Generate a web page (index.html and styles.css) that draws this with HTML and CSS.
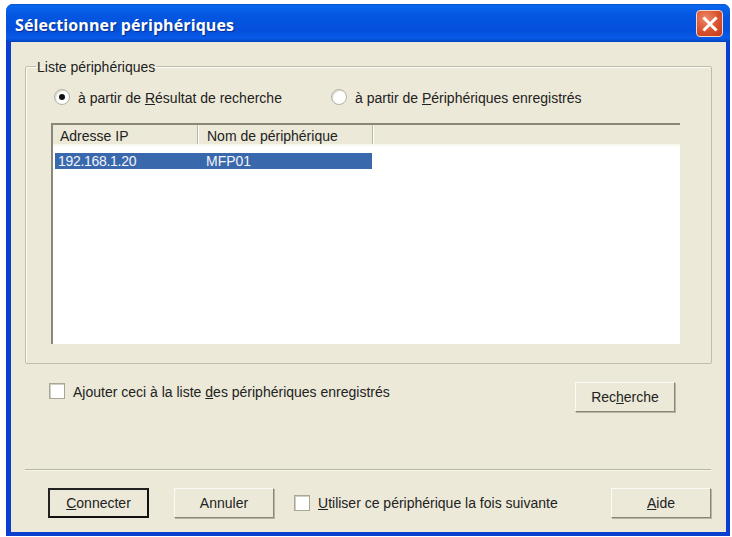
FILE: index.html
```html
<!DOCTYPE html>
<html lang="fr">
<head>
<meta charset="utf-8">
<title>Sélectionner périphériques</title>
<link rel="stylesheet" href="styles.css">
</head>
<body>
<div class="window">
  <div class="titlebar">
    <span class="title">Sélectionner périphériques</span>
    <span class="close">
      <svg width="16" height="16" viewBox="0 0 16 16"><path d="M2.5 2.5 L13.5 13.5 M13.5 2.5 L2.5 13.5" stroke="#fff" stroke-width="3" stroke-linecap="square" fill="none"/></svg>
    </span>
  </div>
  <div class="client">
    <fieldset class="group">
      <legend class="legend">Liste périphériques</legend>
      <div class="radios">
        <label class="radio-item first"><span class="radio checked"></span><span>à partir de <u>R</u>ésultat de recherche</span></label>
        <label class="radio-item"><span class="radio"></span><span>à partir de <u>P</u>ériphériques enregistrés</span></label>
      </div>
      <div class="list">
        <div class="list-head">
          <div class="col col-ip">Adresse IP</div>
          <div class="col col-name">Nom de périphérique</div>
          <div class="col col-rest"></div>
        </div>
        <div class="list-body">
          <div class="row"><span class="cell-ip">192.168.1.20</span><span class="cell-name">MFP01</span></div>
        </div>
      </div>
    </fieldset>
    <div class="middle">
      <label class="check-item"><span class="check"></span><span>Ajouter ceci à la liste <u>d</u>es périphériques enregistrés</span></label>
      <button class="btn">Rec<u>h</u>erche</button>
    </div>
    <div class="separator"></div>
    <div class="footer">
      <button class="btn default"><u>C</u>onnecter</button>
      <button class="btn">Annuler</button>
      <label class="check-item next"><span class="check"></span><span><u>U</u>tiliser ce périphérique la fois suivante</span></label>
      <button class="btn"><u>A</u>ide</button>
    </div>
  </div>
</div>
</body>
</html>
```
FILE: styles.css
```css
* { box-sizing: border-box; }
html, body { margin: 0; height: 100%; background: #fff; }
body { padding: 4px 2px 1px 6px; font-family: "Liberation Sans", Arial, sans-serif; font-size: 14px; color: #222; overflow: hidden; }
.window { width: 724px; height: 532px; display: flex; flex-direction: column; background: #0a3fd0; border-radius: 7px 7px 0 0; overflow: hidden; }
.titlebar { height: 38px; flex: none; display: flex; align-items: center; justify-content: space-between; padding: 1px 7px 0 9px; background: linear-gradient(#0a56d8 0, #0a66ee 6%, #0456e0 30%, #0450dc 70%, #0a5ae8 90%, #0342c0 100%); }
.title { font-family: "Open Sans", sans-serif; font-weight: 700; font-size: 16px; color: #fff; letter-spacing: .1px; padding-top: 2px; text-shadow: 1px 1px 1px #0a2f90; }
.close { width: 27px; height: 27px; display: flex; align-items: center; justify-content: center; border: 1px solid #f2d8cc; border-radius: 4px; background: radial-gradient(circle at 35% 30%, #ee8a68, #d8502c 55%, #c23a18); }
.client { flex: 1; margin: 0 4px 4px 5px; background: #ece9d8; padding: 16px 15px 0 14px; display: flex; flex-direction: column; }
.group { margin: 0; padding: 0 31px 18px 25px; width: 686px; height: 306px; border: 1px solid #c0bdaa; border-radius: 2px; box-shadow: inset 1px 1px 0 #fbfaf4; flex: none; }
.legend { padding: 0 1px; margin-left: -15px; line-height: 17px; font-size: 14px; position: relative; top: 1px; }
.radios { display: flex; height: 25px; margin-top: 9px; align-items: center; }
.radio-item { display: flex; align-items: center; gap: 8px; }
.radio-item > span:last-child { position: relative; top: 1px; }
.radio-item.first { width: 277px; margin-left: 3px; }
.radio { width: 16px; height: 16px; border-radius: 50%; background: #fff; border: 1px solid #b4b2a4; position: relative; box-shadow: inset 1px 1px 1px #d8d6c8; }
.radio.checked::after { content: ""; position: absolute; left: 4px; top: 4px; width: 6px; height: 6px; border-radius: 50%; background: #111; }
.list { margin-top: 14px; width: 629px; height: 221px; display: flex; flex-direction: column; border-top: 2px solid #8a8778; border-left: 2px solid #8a8778; box-shadow: inset -1px -1px 0 #f4f2e6; background: #fff; }
.list-head { height: 21px; flex: none; display: flex; background: #ece9d8; border-bottom: 2px solid #f8f7ee; }
.col { padding: 3px 0 0 7px; line-height: 17px; border-right: 1px solid #b8b5a2; box-shadow: 1px 0 0 #fff; }
.col-ip { width: 145px; }
.col-name { width: 175px; padding-left: 9px; }
.col-rest { flex: 1; border: none; box-shadow: none; }
.list-body { flex: 1; padding: 7px 0 0 2px; background: #fff; }
.row { display: flex; width: 317px; height: 16px; line-height: 17px; background: #3a68ac; color: #f2f4fa; }
.cell-ip { width: 151px; padding-left: 3px; letter-spacing: -.3px; }
.middle { height: 105px; flex: none; display: flex; justify-content: space-between; align-items: flex-start; padding: 18px 36px 0 24px; }
.check-item { display: flex; align-items: center; gap: 8px; }
.middle .check-item { margin-top: 2px; }
.middle .check { position: relative; top: -1px; }
.check { width: 16px; height: 16px; background: #fff; border: 1px solid #a8a696; box-shadow: inset 1px 1px 0 #d0cebe; flex: none; }
.btn { flex: none; width: 101px; height: 30px; padding: 0 0 1px; font: inherit; color: inherit; background: #ece9d8; border: 1px solid; border-color: #fbfaf4 #8a8778 #8a8778 #fbfaf4; box-shadow: 1px 1px 0 #b8b5a2; }
.middle .btn { width: 100px; }
.btn.default { border: 2px solid #111; border-color: #222 #111 #111 #222; box-shadow: none; }
.separator { height: 2px; flex: none; background: #b8b5a2; border-bottom: 1px solid #f8f7ee; width: 686px; }
.footer { display: flex; align-items: center; padding: 17px 0 0 23px; }
.footer .btn + .btn { margin-left: 25px; width: 100px; }
.footer .next + .btn { width: 100px; }
.next { flex: none; margin-left: 20px; width: 317px; }
```
